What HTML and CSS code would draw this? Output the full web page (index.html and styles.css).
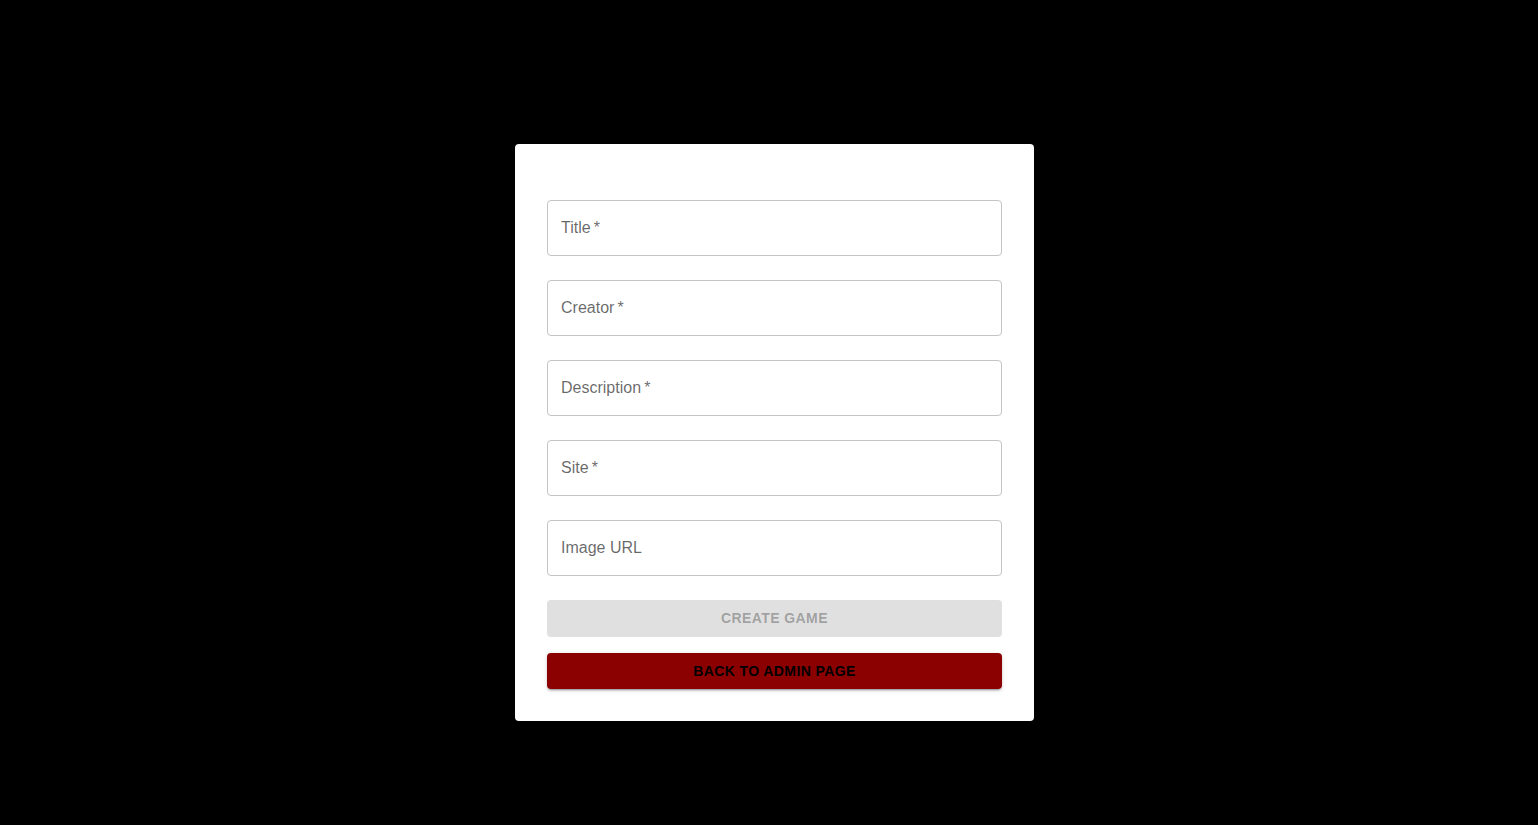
FILE: index.html
```html
<!DOCTYPE html>
<html>
<head>
<meta charset="utf-8">
<link rel="stylesheet" href="styles.css">
</head>
<body>
<div class="page">
  <form class="card">
    <div class="field"><span class="label">Title&thinsp;*</span></div>
    <div class="field"><span class="label">Creator&thinsp;*</span></div>
    <div class="field"><span class="label">Description&thinsp;*</span></div>
    <div class="field"><span class="label">Site&thinsp;*</span></div>
    <div class="field"><span class="label">Image URL</span></div>
    <button type="button" class="btn btn-disabled">CREATE GAME</button>
    <button type="button" class="btn btn-back">BACK TO ADMIN PAGE</button>
  </form>
</div>
</body>
</html>
```
FILE: styles.css
```css
html, body {
  margin: 0;
  padding: 0;
  background: #000;
  height: 100%;
}
.page {
  display: flex;
  justify-content: center;
  align-items: flex-start;
  padding-top: 144px;
  padding-left: 11px;
  font-family: "Liberation Sans", Arial, sans-serif;
}
.card {
  width: 455px;
  background: #fff;
  border-radius: 4px;
  padding: 56px 32px 32px;
  display: flex;
  flex-direction: column;
}
.field {
  height: 54px;
  border: 1px solid #c4c4c4;
  border-radius: 4px;
  display: flex;
  align-items: center;
  padding: 0 13px;
  margin-bottom: 24px;
}
.label {
  font-family: "Liberation Sans", Arial, sans-serif;
  font-size: 16px;
  color: rgba(0, 0, 0, 0.6);
  line-height: 1;
}
.btn {
  height: 36.5px;
  border: none;
  border-radius: 4px;
  font-family: "Liberation Sans", Arial, sans-serif;
  font-size: 14px;
  font-weight: bold;
  letter-spacing: 0.4px;
  padding: 0;
}
.btn-disabled {
  background: #e0e0e0;
  color: rgba(0, 0, 0, 0.3);
}
.btn-back {
  margin-top: 16px;
  background: #8b0000;
  color: #000;
  box-shadow: 0 3px 1px -2px rgba(0,0,0,0.2), 0 2px 2px 0 rgba(0,0,0,0.14), 0 1px 5px 0 rgba(0,0,0,0.12);
}
```
